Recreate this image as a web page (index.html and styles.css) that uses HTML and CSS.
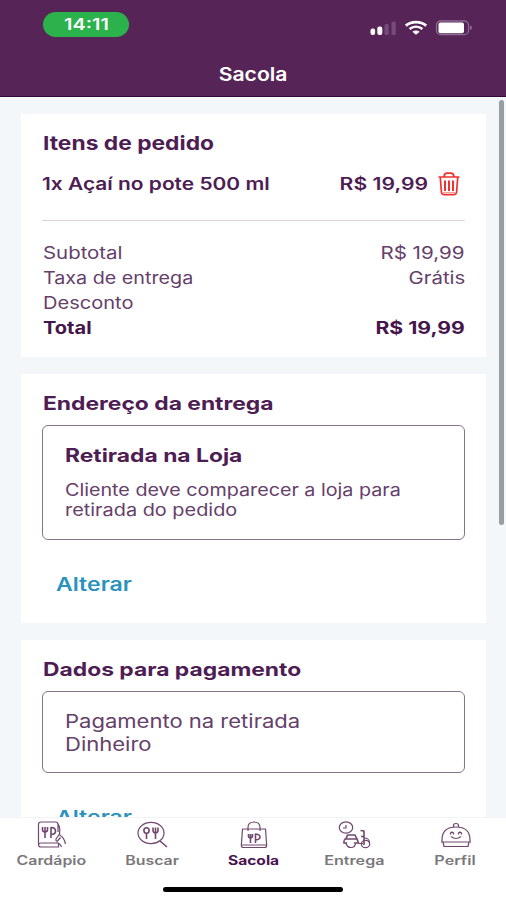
FILE: index.html
```html
<!DOCTYPE html>
<html lang="pt-BR">
<head>
<meta charset="utf-8">
<title>Sacola</title>
<link rel="stylesheet" href="styles.css">
</head>
<body>
<div class="app">
  <header class="top">
    <div class="status">
      <div class="clock"><span class="w128">14:11</span></div>
      <div class="signals">
        <svg width="28" height="16" viewBox="0 0 28 16"><rect x="1.500" y="8.500" width="4.600" height="6.500" rx="2" fill="#fff"/><rect x="8.300" y="6.500" width="5" height="8.500" rx="2" fill="#fff"/><rect x="15.500" y="4" width="4.300" height="11" rx="1.500" fill="#764a7a"/><rect x="22.500" y="1.500" width="4.300" height="13.500" rx="1.500" fill="#764a7a"/></svg>
        <svg class="wifi" width="24" height="16" viewBox="0 0 24 16" fill="none" stroke="#fff"><path d="M1.800 5.600C7.500.9 16.500.9 22.200 5.600" stroke-width="2.800"/><path d="M5.600 9C9.400 6 14.600 6 18.400 9" stroke-width="2.500"/><path d="M12 14.800 8.400 11.800C10.400 10.100 13.600 10.100 15.600 11.800Z" fill="#fff" stroke="none"/></svg>
        <svg class="battery" width="38" height="16" viewBox="0 0 38 16"><rect x="1.500" y="1" width="32" height="13.600" rx="4.200" fill="none" stroke="#8e6b92" stroke-width="1.300"/><rect x="3.500" y="2.600" width="25.500" height="10.600" rx="2" fill="#fff"/><path d="M35 5.500Q37 6 37 7.800 37 9.600 35 10.100Z" fill="#8e6b92"/></svg>
      </div>
    </div>
    <h1><span class="w114">Sacola</span></h1>
  </header>

  <main>
    <section class="card order">
      <h2><span class="w120">Itens de pedido</span></h2>
      <div class="item">
        <span class="w123">1x Açaí no pote 500 ml</span>
        <div class="price">
          <span class="w125 end">R$ 19,99</span>
          <svg width="22" height="24" viewBox="0 0 22 24" fill="none" stroke="#f0302e" stroke-width="1.700"><path d="M.5 5H21.500M6 4.500Q6.500 1.200 9 1.200H13Q15.500 1.200 16 4.500M2.300 5.500 3.400 20Q3.700 22.700 6.200 22.700H15.800Q18.300 22.700 18.600 20L19.700 5.500"/><path d="M7 8.500V19M11 8.500V19M15 8.500V19" stroke-width="2"/><path d="M5 20.600H17" stroke-width="1" opacity=".5"/></svg>
        </div>
      </div>
      <dl>
        <div><dt><span class="w120">Subtotal</span></dt><dd><span class="w122 end">R$ 19,99</span></dd></div>
        <div><dt><span class="w116">Taxa de entrega</span></dt><dd><span class="w121 end">Grátis</span></dd></div>
        <div><dt><span class="w118">Desconto</span></dt><dd></dd></div>
        <div class="total"><dt><span class="w118">Total</span></dt><dd><span class="w125 end">R$ 19,99</span></dd></div>
      </dl>
    </section>

    <section class="card address">
      <h2><span class="w124">Endereço da entrega</span></h2>
      <div class="box">
        <h3><span class="w124">Retirada na Loja</span></h3>
        <p><span class="w116">Cliente deve comparecer a loja para</span><br><span class="w117">retirada do pedido</span></p>
      </div>
      <a class="change"><span class="w125">Alterar</span></a>
    </section>

    <section class="card payment">
      <h2><span class="w124">Dados para pagamento</span></h2>
      <div class="box">
        <p><span class="w119">Pagamento na retirada</span><br><span class="w119">Dinheiro</span></p>
      </div>
      <a class="change"><span class="w125">Alterar</span></a>
    </section>
    <div class="scrollbar"></div>
  </main>

  <nav>
    <ul>
      <li>
        <svg width="30" height="28" viewBox="0 0 30 28"><path d="M21 11V3.500Q21 1 18.500 1H4Q1.500 1 1.500 3.500V23.500Q1.500 26 4 26H21.500V22H4Q1.500 22 1.500 24M21 3Q23.500 6 22.500 14M22.500 13 19 18Q18.500 20.500 20.500 20L23.500 16.500M22.500 14Q27 16 28.500 23M19.500 21.500Q23.500 22.500 24.500 26"/><path class="bold" d="M5.500 6V8.500Q5.500 11 8 11T10.500 8.500V6M8 6V17M14 17V6.500Q18.500 6.500 18.500 10T14 13.500"/></svg>
        <span class="w127">Cardápio</span>
      </li>
      <li>
        <svg width="31" height="28" viewBox="0 0 31 28"><ellipse cx="14" cy="12" rx="13" ry="10.700"/><path class="bold" d="M23 20 30 26"/><path class="bold" d="M9.500 12V18M16 6.500V9Q16 12 18.500 12T21 9V6.500M18.500 6.500V18"/><ellipse class="bold" cx="9.500" cy="9.500" rx="2.600" ry="2.800"/></svg>
        <span class="w127">Buscar</span>
      </li>
      <li class="active">
        <svg width="28" height="28" viewBox="0 0 28 28"><path d="M2.500 8H25.500L26.700 24.500Q26.700 26.500 24.500 26.500H3.500Q1.300 26.500 1.300 24.500ZM2 24H26M8 10V6.500Q8 1 14 1T20 6.500V10"/><path class="bold" d="M8.500 13V15Q8.500 17 10.500 17T12.500 15V13M10.500 13V22M15.500 22V13Q20 13.500 20 16T15.500 19"/></svg>
        <span class="w125">Sacola</span>
      </li>
      <li>
        <svg width="33" height="28" viewBox="0 0 33 28"><ellipse cx="8" cy="6.500" rx="6.700" ry="5.700"/><path d="M8 4V7H5"/><path class="bold" d="M9.500 14H17L19 18H8ZM7.500 17.500Q5.500 19.500 5.800 22H9M19 18 20.500 22H16M22.500 9.500 26 10V24M26 15.500H23"/><path d="M26 17Q31.500 17 31.500 22M20.500 22.500H25"/><path d="M8 22Q9 26.500 13 26.500T17.500 22.500"/><ellipse cx="27.500" cy="23" rx="4.200" ry="3.700"/></svg>
        <span class="w129">Entrega</span>
      </li>
      <li>
        <svg width="32" height="28" viewBox="0 0 32 28"><path d="M2 19Q2 6 16 6T30 19V21H2ZM1 21H31M3 21 4 25.500H28L29 21M13.500 6V4.500Q13.500 2.500 16 2.500T18.500 4.500V6M10.500 13.500V12Q12 10.500 13.500 12V13.500M18.500 13.500V12Q20 10.500 21.500 12V13.500M11 15.500Q16 19.500 21 15.500"/></svg>
        <span class="w129">Perfil</span>
      </li>
    </ul>
    <div class="home"></div>
  </nav>
</div>
</body>
</html>
```
FILE: styles.css
```css
* { box-sizing: border-box; margin: 0; padding: 0; }

body {
  font-family: "Inter", "Liberation Sans", sans-serif;
  color: #4d1d53;
}

.app {
  width: 506px;
  height: 900px;
  display: flex;
  flex-direction: column;
  overflow: hidden;
  background: #f3f7f9;
}

/* Wide lettering: each class stretches its text horizontally. */
[class^="w1"] {
  display: inline-block;
  white-space: nowrap;
  transform-origin: left center;
}
.end { transform-origin: right center; }
.clock [class^="w1"],
h1 [class^="w1"],
nav [class^="w1"] { transform-origin: center; }
.w114 { transform: scaleX(1.142); }
.w116 { transform: scaleX(1.16); }
.w117 { transform: scaleX(1.17); }
.w118 { transform: scaleX(1.18); }
.w119 { transform: scaleX(1.19); }
.w120 { transform: scaleX(1.2); }
.w121 { transform: scaleX(1.2); }
.w122 { transform: scaleX(1.21); }
.w123 { transform: scaleX(1.23); }
.w124 { transform: scaleX(1.234); }
.w125 { transform: scaleX(1.245); }
.w127 { transform: scaleX(1.272); }
.w128 { transform: scaleX(1.28); }
.w129 { transform: scaleX(1.29); }

.top {
  flex: none;
  height: 97px;
  padding-top: 12px;
  background: #562457;
  border-bottom: 1px solid #36093b;
  color: #fff;
}
.status {
  height: 25px;
  padding: 0 33px 0 43px;
  display: flex;
  justify-content: space-between;
}
.clock {
  width: 86px;
  height: 25px;
  border-radius: 13px;
  background: #2bb24c;
  font-size: 15.5px;
  font-weight: 600;
  line-height: 25px;
  text-align: center;
}
.signals { display: flex; gap: 7px; padding-top: 8px; }
h1 {
  margin-top: 25px;
  font-size: 18.5px;
  font-weight: 600;
  line-height: 24px;
  text-align: center;
}

main {
  flex: 1;
  min-height: 0;
  position: relative;
  overflow: hidden;
  padding: 17px 20px 0 21px;
}
.card {
  background: #fff;
  padding: 0 21px;
  margin-bottom: 17px;
}
.order { height: 243px; padding-top: 18px; }
.address { height: 249px; padding-top: 17px; }
.payment { height: 249px; padding-top: 17px; }

h2, h3 { font-size: 18.5px; font-weight: 700; line-height: 24px; }
h2 { padding-left: 0.5px; }
.order h2 { font-size: 19px; }

.item {
  margin-top: 12px;
  padding-top: 4px;
  height: 53px;
  display: flex;
  justify-content: space-between;
  border-bottom: 1px solid #e2cfd3;
  font-size: 17px;
  font-weight: 600;
  line-height: 24px;
}
.price { display: flex; gap: 10px; padding-right: 5px; }

dl {
  padding: 20px 0 0 0.5px;
  font-size: 17px;
  line-height: 25px;
  color: #65406a;
}
dl div { display: flex; justify-content: space-between; height: 25px; }
.total { font-weight: 700; color: #45164b; }

.box {
  border: 1px solid #85748a;
  border-radius: 6px;
  padding: 17px 0 0 22px;
}
.address .box { height: 115px; margin-top: 10px; }
.payment .box { height: 82px; margin-top: 10px; padding-top: 18px; }
.address p { margin-top: 13px; font-size: 17px; line-height: 20px; }
.payment p { font-size: 18.5px; line-height: 23px; }
.box p { color: #65406a; }

.change {
  display: block;
  margin: 32px 0 0 13.5px;
  color: #2a93bd;
  font-size: 18.5px;
  font-weight: 600;
  line-height: 24px;
}

.scrollbar {
  position: absolute;
  top: 3px;
  right: 2px;
  width: 5px;
  height: 425px;
  border-radius: 3px;
  background: #969fa3;
}

nav {
  flex: none;
  height: 83px;
  background: #fff;
  border-top: 1px solid #f1f3f4;
}
ul {
  display: grid;
  grid-template-columns: repeat(5, 1fr);
  padding-left: 1px;
  list-style: none;
}
li {
  display: flex;
  flex-direction: column;
  align-items: center;
  padding-top: 3px;
  font-size: 12.5px;
  font-weight: 600;
  line-height: 16px;
  color: #7a787b;
}
.active { color: #48134f; font-weight: 700; }
nav svg {
  margin-bottom: 4px;
  fill: none;
  stroke: #70476f;
  stroke-width: 1.2;
  stroke-linejoin: round;
}
nav .bold { stroke-width: 1.6; }
.home {
  width: 180px;
  height: 5px;
  margin: 18px auto 0;
  border-radius: 3px;
  background: #000;
}
```
